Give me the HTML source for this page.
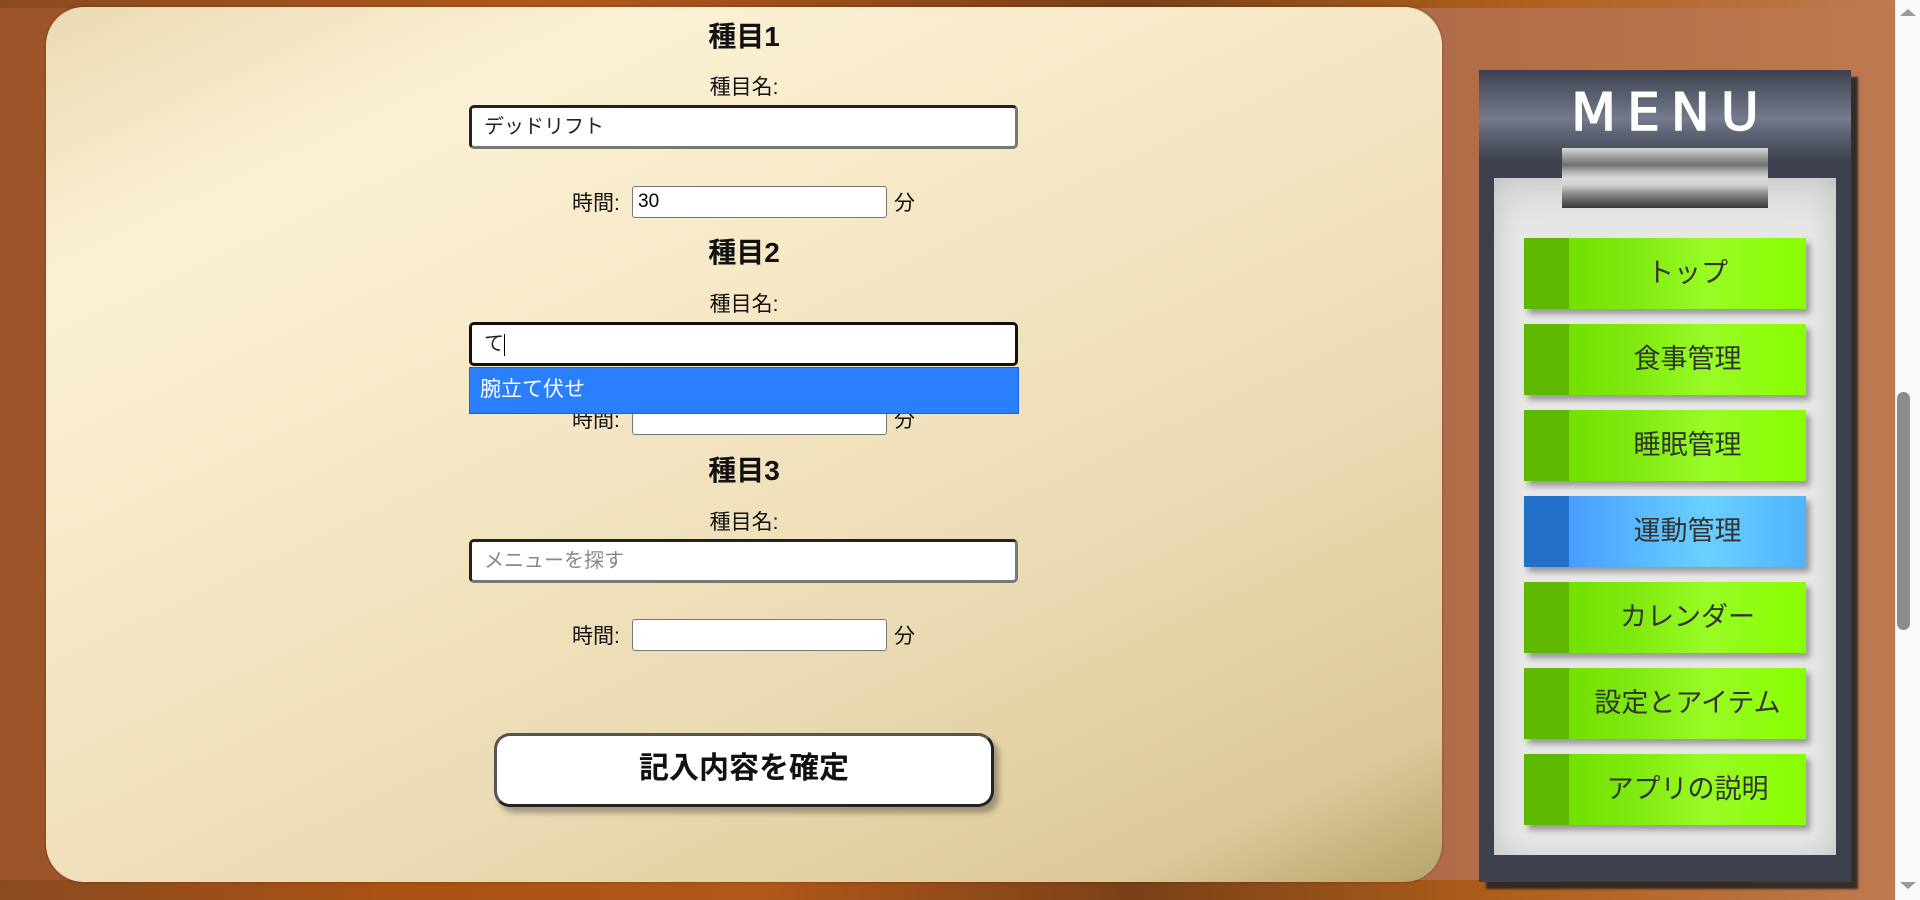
<!DOCTYPE html>
<html><head><meta charset="utf-8"><style>
*{margin:0;padding:0;box-sizing:border-box}
body{width:1920px;height:900px;overflow:hidden;position:relative;font-family:"Liberation Sans","Noto Sans CJK JP",sans-serif;
background:linear-gradient(90deg,#9c5328 0%,#a8602f 20%,#a86540 50%,#b06c48 75%,#c07a50 100%)}
.topbar{position:absolute;left:0;top:0;width:1895px;height:8px;background:linear-gradient(90deg,#8a4a20,#b0581a 30%,#7a4018 60%,#b0601a 80%,#c07a50)}
.botbar{position:absolute;left:0;top:880px;width:1895px;height:20px;background:linear-gradient(90deg,#8a4a20,#a85214 20%,#b0581a 40%,#7a4018 60%,#b0601a 80%,#c07a50)}
.panel{position:absolute;left:46px;top:7px;width:1396px;height:875px;border-radius:38px;
background:linear-gradient(155deg,#ebdab2 0%,#fcf1d5 18%,#f6e8c6 40%,#ecdcb5 65%,#ddc998 90%,#b8a26c 100%);box-shadow:0 0 3px rgba(0,0,0,.3)}
.abs{position:absolute}
.h{position:absolute;left:469px;width:550px;text-align:center;font-size:28px;font-weight:bold;color:#111;line-height:36px}
.lbl{position:absolute;left:469px;width:550px;text-align:center;font-size:21px;color:#111;line-height:28px}
.name{position:absolute;left:469px;width:549px;height:44px;background:#fff;border:3px solid #222;border-right-color:#777;border-bottom-color:#777;border-radius:5px;font-size:20px;padding-left:12px;line-height:38px;color:#222}
.trow{position:absolute;left:469px;width:550px;font-size:21px;color:#111}
.tin{position:absolute;left:163px;top:0;width:255px;height:32px;background:#fff;border:1px solid #777;border-radius:3px;font-size:19px;padding-left:5px;line-height:30px;color:#000}
.tu{position:absolute;left:425px;top:1px}
.tl{position:absolute;left:103px;top:1px}
.menu{position:absolute;left:1479px;top:70px;width:372px;height:812px;background:#3d414d;box-shadow:7px 7px 2px rgba(40,36,34,.9)}
.mhead{position:absolute;left:0;top:0;width:372px;height:108px;background:linear-gradient(180deg,#3d414d 0%,#5c6172 25%,#757a8c 45%,#555a6a 65%,#3d414d 85%)}
.mtitle{position:absolute;left:0;top:12px;width:372px;text-align:center;color:#fff;font-size:52px;letter-spacing:11px;padding-left:11px;font-family:"DejaVu Sans",sans-serif;line-height:62px;-webkit-text-stroke:1.5px #fff}
.inner{position:absolute;left:15px;top:108px;width:342px;height:677px;background:#e8e8e8;box-shadow:inset 0 0 30px rgba(0,0,0,.12),inset 0 30px 40px rgba(0,0,0,.06)}
.clip{position:absolute;left:83px;top:78px;width:206px;height:60px;background:linear-gradient(180deg,#d8d8d8 0%,#aaa 12%,#707070 28%,#b0b0b0 40%,#dadada 50%,#d0d0d0 62%,#909090 75%,#606060 88%,#3a3a3a 100%)}
.btn{position:absolute;left:1524px;width:282px;height:71px;background:linear-gradient(90deg,#5fb800 0,#5fb800 45px,#72e000 45px,#80ea10 40%,#98fb25 65%,#88ff00 100%);box-shadow:4px 5px 6px rgba(0,0,0,.35);font-size:27px;color:#333;text-align:center;padding-left:45px;line-height:71px}
.btn.blue{background:linear-gradient(90deg,#2370c8 0,#2370c8 45px,#4a9cff 45px,#58b8ff 40%,#6ad0ff 65%,#50b4ff 100%)}
.sb{position:absolute;left:1895px;top:0;width:25px;height:900px;background:#fafafa;border-left:1px solid #eee}
</style></head><body>
<div class="topbar"></div><div class="botbar"></div>
<div class="panel"></div>

<div class="h" style="top:19px">種目1</div>
<div class="lbl" style="top:74px">種目名:</div>
<div class="name" style="top:105px">デッドリフト</div>
<div class="trow" style="top:186px"><span class="tl">時間:</span><div class="tin">30</div><span class="tu">分</span></div>

<div class="h" style="top:235px">種目2</div>
<div class="lbl" style="top:291px">種目名:</div>
<div class="trow" style="top:403px"><span class="tl">時間:</span><div class="tin"></div><span class="tu">分</span></div>
<div class="name" style="top:322px;border-color:#111">て<span style="display:inline-block;width:1px;height:22px;background:#000;vertical-align:middle"></span></div>
<div class="abs" style="left:469px;top:367px;width:550px;height:47px;background:#2a7fff;border:1px solid #1a5fe0;color:#fff;font-size:21px;line-height:44px;padding-left:10px">腕立て伏せ</div>

<div class="h" style="top:453px">種目3</div>
<div class="lbl" style="top:509px">種目名:</div>
<div class="name" style="top:539px;color:#888">メニューを探す</div>
<div class="trow" style="top:619px"><span class="tl">時間:</span><div class="tin"></div><span class="tu">分</span></div>

<div class="abs" style="left:494px;top:733px;width:500px;height:74px;background:#fff;border:3px solid #222;border-top-color:#555;border-left-color:#555;border-radius:16px;box-shadow:5px 6px 6px rgba(0,0,0,.3);text-align:center;font-size:30px;font-weight:bold;line-height:66px;color:#111">記入内容を確定</div>

<div class="menu">
<div class="mhead"></div>
<div class="mtitle">MENU</div>
<div class="inner"></div>
<div class="clip"></div>
</div>
<div class="btn" style="top:238px">トップ</div>
<div class="btn" style="top:324px">食事管理</div>
<div class="btn" style="top:410px">睡眠管理</div>
<div class="btn blue" style="top:496px">運動管理</div>
<div class="btn" style="top:582px">カレンダー</div>
<div class="btn" style="top:668px">設定とアイテム</div>
<div class="btn" style="top:754px">アプリの説明</div>

<div class="sb">
<div class="abs" style="left:4px;top:9px;width:0;height:0;border-left:8px solid transparent;border-right:8px solid transparent;border-bottom:7px solid #999"></div>
<div class="abs" style="left:1px;top:392px;width:13px;height:238px;background:#8c8c8c;border-radius:7px"></div>
<div class="abs" style="left:4px;top:882px;width:0;height:0;border-left:8px solid transparent;border-right:8px solid transparent;border-top:7px solid #999"></div>
</div>
</body></html>
